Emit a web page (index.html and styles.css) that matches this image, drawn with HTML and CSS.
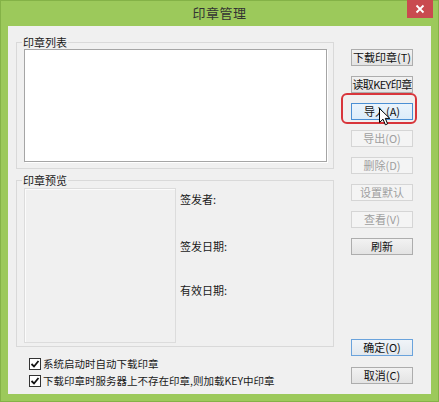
FILE: index.html
```html
<!DOCTYPE html>
<html lang="zh-CN">
<head>
<meta charset="utf-8">
<title>印章管理</title>
<link rel="stylesheet" href="styles.css">
</head>
<body>
<div class="window">
  <div class="titlebar">
    <div class="title">印章管理</div>
    <div class="close">
      <svg width="10" height="10" viewBox="0 0 10 10"><path d="M1.5 1.5 L8.5 8.5 M8.5 1.5 L1.5 8.5" stroke="#fff" stroke-width="1.8" fill="none"/></svg>
    </div>
  </div>
  <div class="client">
    <div class="left">
      <fieldset class="group group-list">
        <legend>印章列表</legend>
        <div class="listbox"></div>
      </fieldset>
      <fieldset class="group group-preview">
        <legend>印章预览</legend>
        <div class="preview-row">
          <div class="preview"></div>
          <div class="info">
            <div class="info-row r1">签发者:</div>
            <div class="info-row r2">签发日期:</div>
            <div class="info-row r3">有效日期:</div>
          </div>
        </div>
      </fieldset>
      <div class="checks">
        <label class="check"><span class="box"><svg width="10" height="10" viewBox="0 0 10 10"><path d="M1.5 5 L4 7.5 L8.5 2" stroke="#111" stroke-width="1.8" fill="none"/></svg></span>系统启动时自动下载印章</label>
        <label class="check"><span class="box"><svg width="10" height="10" viewBox="0 0 10 10"><path d="M1.5 5 L4 7.5 L8.5 2" stroke="#111" stroke-width="1.8" fill="none"/></svg></span>下载印章时服务器上不存在印章,则加载KEY中印章</label>
      </div>
    </div>
    <div class="right">
      <div class="btn-col">
        <button class="btn">下载印章(T)</button>
        <button class="btn tight">读取KEY印章</button>
        <div class="btn-wrap">
          <button class="btn focus">导入(A)</button>
          <div class="highlight"></div>
          <svg class="cursor" width="12" height="19" viewBox="0 0 12 19"><path d="M0.5 0.5 L0.5 14.5 L4 11.2 L6.4 16.8 L8.6 15.8 L6.3 10.4 L10.8 10.4 Z" fill="#fff" stroke="#000" stroke-width="1" stroke-linejoin="round"/></svg>
        </div>
        <button class="btn disabled">导出(O)</button>
        <button class="btn disabled">删除(D)</button>
        <button class="btn disabled">设置默认</button>
        <button class="btn disabled">查看(V)</button>
        <button class="btn">刷新</button>
      </div>
      <div class="btn-col bottom">
        <button class="btn default">确定(O)</button>
        <button class="btn">取消(C)</button>
      </div>
    </div>
  </div>
</div>
</body>
</html>
```

FILE: styles.css
```css
* { box-sizing: border-box; }
html, body { margin: 0; padding: 0; }
body {
  width: 439px;
  height: 402px;
  overflow: hidden;
  font-family: "Noto Sans CJK SC", "Microsoft YaHei", sans-serif;
  font-size: 11px;
  color: #1a1a1a;
}
.window {
  width: 439px;
  height: 402px;
  background: #9cc95b;
  border: 1px solid #84b247;
  display: flex;
  flex-direction: column;
}
.titlebar {
  height: 25px;
  display: grid;
  grid-template-columns: 1fr auto 1fr;
}
.title {
  grid-column: 2;
  font-size: 13px;
  line-height: 24px;
  color: #333;
  letter-spacing: 0.5px;
}
.close {
  grid-column: 3;
  justify-self: end;
  align-self: start;
  width: 26px;
  height: 18px;
  margin-right: 5px;
  margin-top: -1px;
  background: #c94a4f;
  display: flex;
  align-items: center;
  justify-content: center;
}
.client {
  margin: 0 7px;
  height: 368px;
  background: #f0f0f0;
  display: flex;
  padding: 10px 0 0 8px;
}
.left {
  width: 318px;
  display: flex;
  flex-direction: column;
}
.group {
  margin: 0;
  border: 1px solid #d9d9d9;
  min-width: 0;
}
.group legend {
  padding: 0 1px;
  margin-left: -2px;
  line-height: 12px;
  height: 12px;
  color: #1a1a1a;
}
.group-list {
  padding: 1px 6px 6px 7px;
}
.listbox {
  height: 113px;
  background: #fff;
  border: 1px solid #a5a5a5;
  box-shadow: 1px 1px 0 #fff;
}
.group-preview {
  margin-top: 5px;
  padding: 2px 6px 3px 7px;
}
.preview-row {
  display: flex;
}
.preview {
  width: 152px;
  height: 155px;
  border: 1px solid #dcdcdc;
  box-shadow: inset 1px 1px 0 #fbfbfb;
  background: #f0f0f0;
}
.info {
  margin-left: 4px;
  display: flex;
  flex-direction: column;
}
.info-row {
  line-height: 12px;
  height: 12px;
}
.r1 { margin-top: 5px; }
.r2 { margin-top: 35px; }
.r3 { margin-top: 32px; }
.checks {
  margin-top: 8px;
  padding-left: 13px;
  display: flex;
  flex-direction: column;
  font-size: 10.5px;
}
.check {
  height: 17px;
  display: flex;
  align-items: center;
  line-height: 12px;
}
.box {
  width: 12px;
  height: 12px;
  border: 1px solid #333;
  background: #fff;
  margin-right: 2px;
  display: flex;
  align-items: center;
  justify-content: center;
}
.right {
  margin-left: 17px;
  width: 62px;
  display: flex;
  flex-direction: column;
  padding-top: 13px;
  padding-bottom: 10px;
}
.btn-col {
  display: flex;
  flex-direction: column;
  gap: 10px;
}
.btn-col.bottom {
  margin-top: auto;
  gap: 11px;
}
.btn {
  width: 62px;
  height: 17px;
  padding: 0;
  margin: 0;
  font-family: inherit;
  font-size: 11px;
  line-height: 15px;
  color: #111;
  border: 1px solid #adadad;
  background: linear-gradient(#f2f2f2, #e3e3e3);
  white-space: nowrap;
  overflow: hidden;
}
.btn.tight {
  letter-spacing: -0.6px;
}
.btn.disabled {
  color: #9f9f9f;
  border-color: #d5d5d5;
  background: #f4f4f4;
}
.btn.focus {
  border-color: #4a8fd4;
  background: linear-gradient(#eaf4fc, #dcecfa);
}
.btn.default {
  border-color: #6aa3dc;
  background: linear-gradient(#f0f4f8, #e2e8ee);
}
.btn-wrap {
  position: relative;
  height: 17px;
}
.highlight {
  position: absolute;
  left: -10px;
  top: -10px;
  width: 76px;
  height: 31px;
  border: 2px solid #d8353b;
  border-radius: 6px;
}
.cursor {
  position: absolute;
  left: 28px;
  top: 5px;
}
```
